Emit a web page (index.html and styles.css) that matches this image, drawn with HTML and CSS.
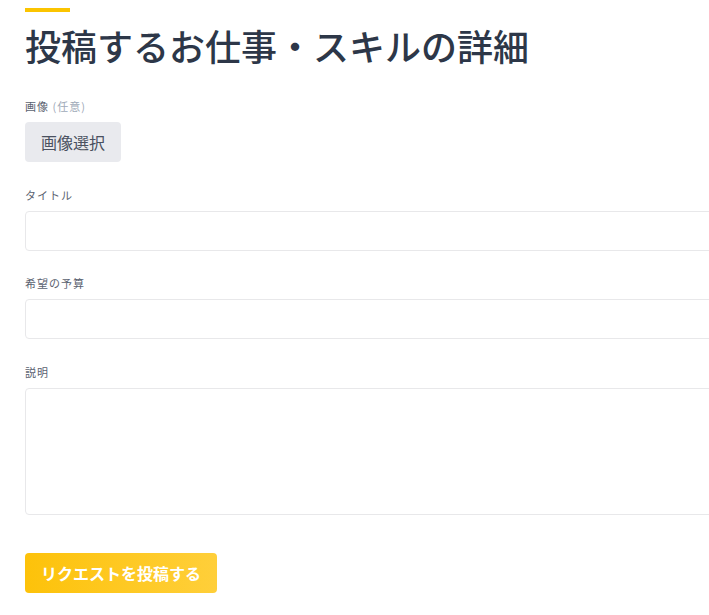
FILE: index.html
```html
<!DOCTYPE html>
<html lang="ja">
<head>
  <meta charset="UTF-8" />
  <meta name="viewport" content="width=device-width, initial-scale=1.0" />
  <title>投稿するお仕事・スキルの詳細</title>
  <link rel="stylesheet" href="styles.css">
</head>
<body>
  <div class="page">
    <div class="accent"></div>
    <h1 class="title">投稿するお仕事・スキルの詳細</h1>

    <form class="post-form">
      <!-- 画像 -->
      <div class="field">
        <label class="label">画像 <span class="optional">(任意)</span></label>
        <button type="button" class="btn-select">画像選択</button>
      </div>

      <div class="field">
        <label class="label" for="title">タイトル</label>
        <input type="text" id="title" class="input">
      </div>

      <div class="field">
        <label class="label" for="budget">希望の予算</label>
        <input type="text" id="budget" class="input">
      </div>

      <div class="field field-last">
        <label class="label" for="desc">説明</label>
        <textarea id="desc" class="input textarea"></textarea>
      </div>

      <button type="submit" class="btn-submit">リクエストを投稿する</button>
    </form>
  </div>
</body>
</html>
```

FILE: styles.css
```css
body {
  margin: 0;
  padding: 8px 0 0 25px;
  background: #fff;
  font-family: "Noto Sans CJK JP", "Noto Sans", sans-serif;
  color: #2d3748;
}
/* the form is wider than the window, clip it at the right edge */
.page {
  overflow: hidden;
}
.accent {
  width: 45px;
  height: 4px;
  background: #fbc400;
}
.title {
  margin: 6px 0 0;
  font-size: 36px;
  line-height: 54px;
  font-weight: 500;
  color: #2d3748;
}
.post-form {
  width: 740px;
  margin-top: 26px;
}
.field {
  margin-bottom: 24.5px;
}
.field-last {
  margin-bottom: 38.5px;
}
.label {
  display: block;
  margin-bottom: 8px;
  font-size: 11px;
  line-height: 16px;
  letter-spacing: 1px;
  color: #5a6270;
}
.optional {
  color: #a0aab8;
}
.btn-select {
  display: block;
  height: 40px;
  padding: 0 16px;
  border: none;
  border-radius: 4px;
  background: #e9eaee;
  color: #4a5160;
  font-family: inherit;
  font-size: 16px;
  cursor: pointer;
}
.input {
  display: block;
  box-sizing: border-box;
  width: 100%;
  height: 40px;
  border: 1px solid #e8e8ea;
  border-radius: 4px;
  background: #fff;
  font-family: inherit;
  font-size: 14px;
}
.textarea {
  height: 127px;
  resize: none;
}
.btn-submit {
  display: block;
  height: 40px;
  padding: 0 16px;
  border: none;
  border-radius: 4px;
  background: linear-gradient(90deg, #fdc20a, #ffcf3a);
  color: #fff;
  font-family: inherit;
  font-size: 16px;
  font-weight: 700;
  cursor: pointer;
}
```
